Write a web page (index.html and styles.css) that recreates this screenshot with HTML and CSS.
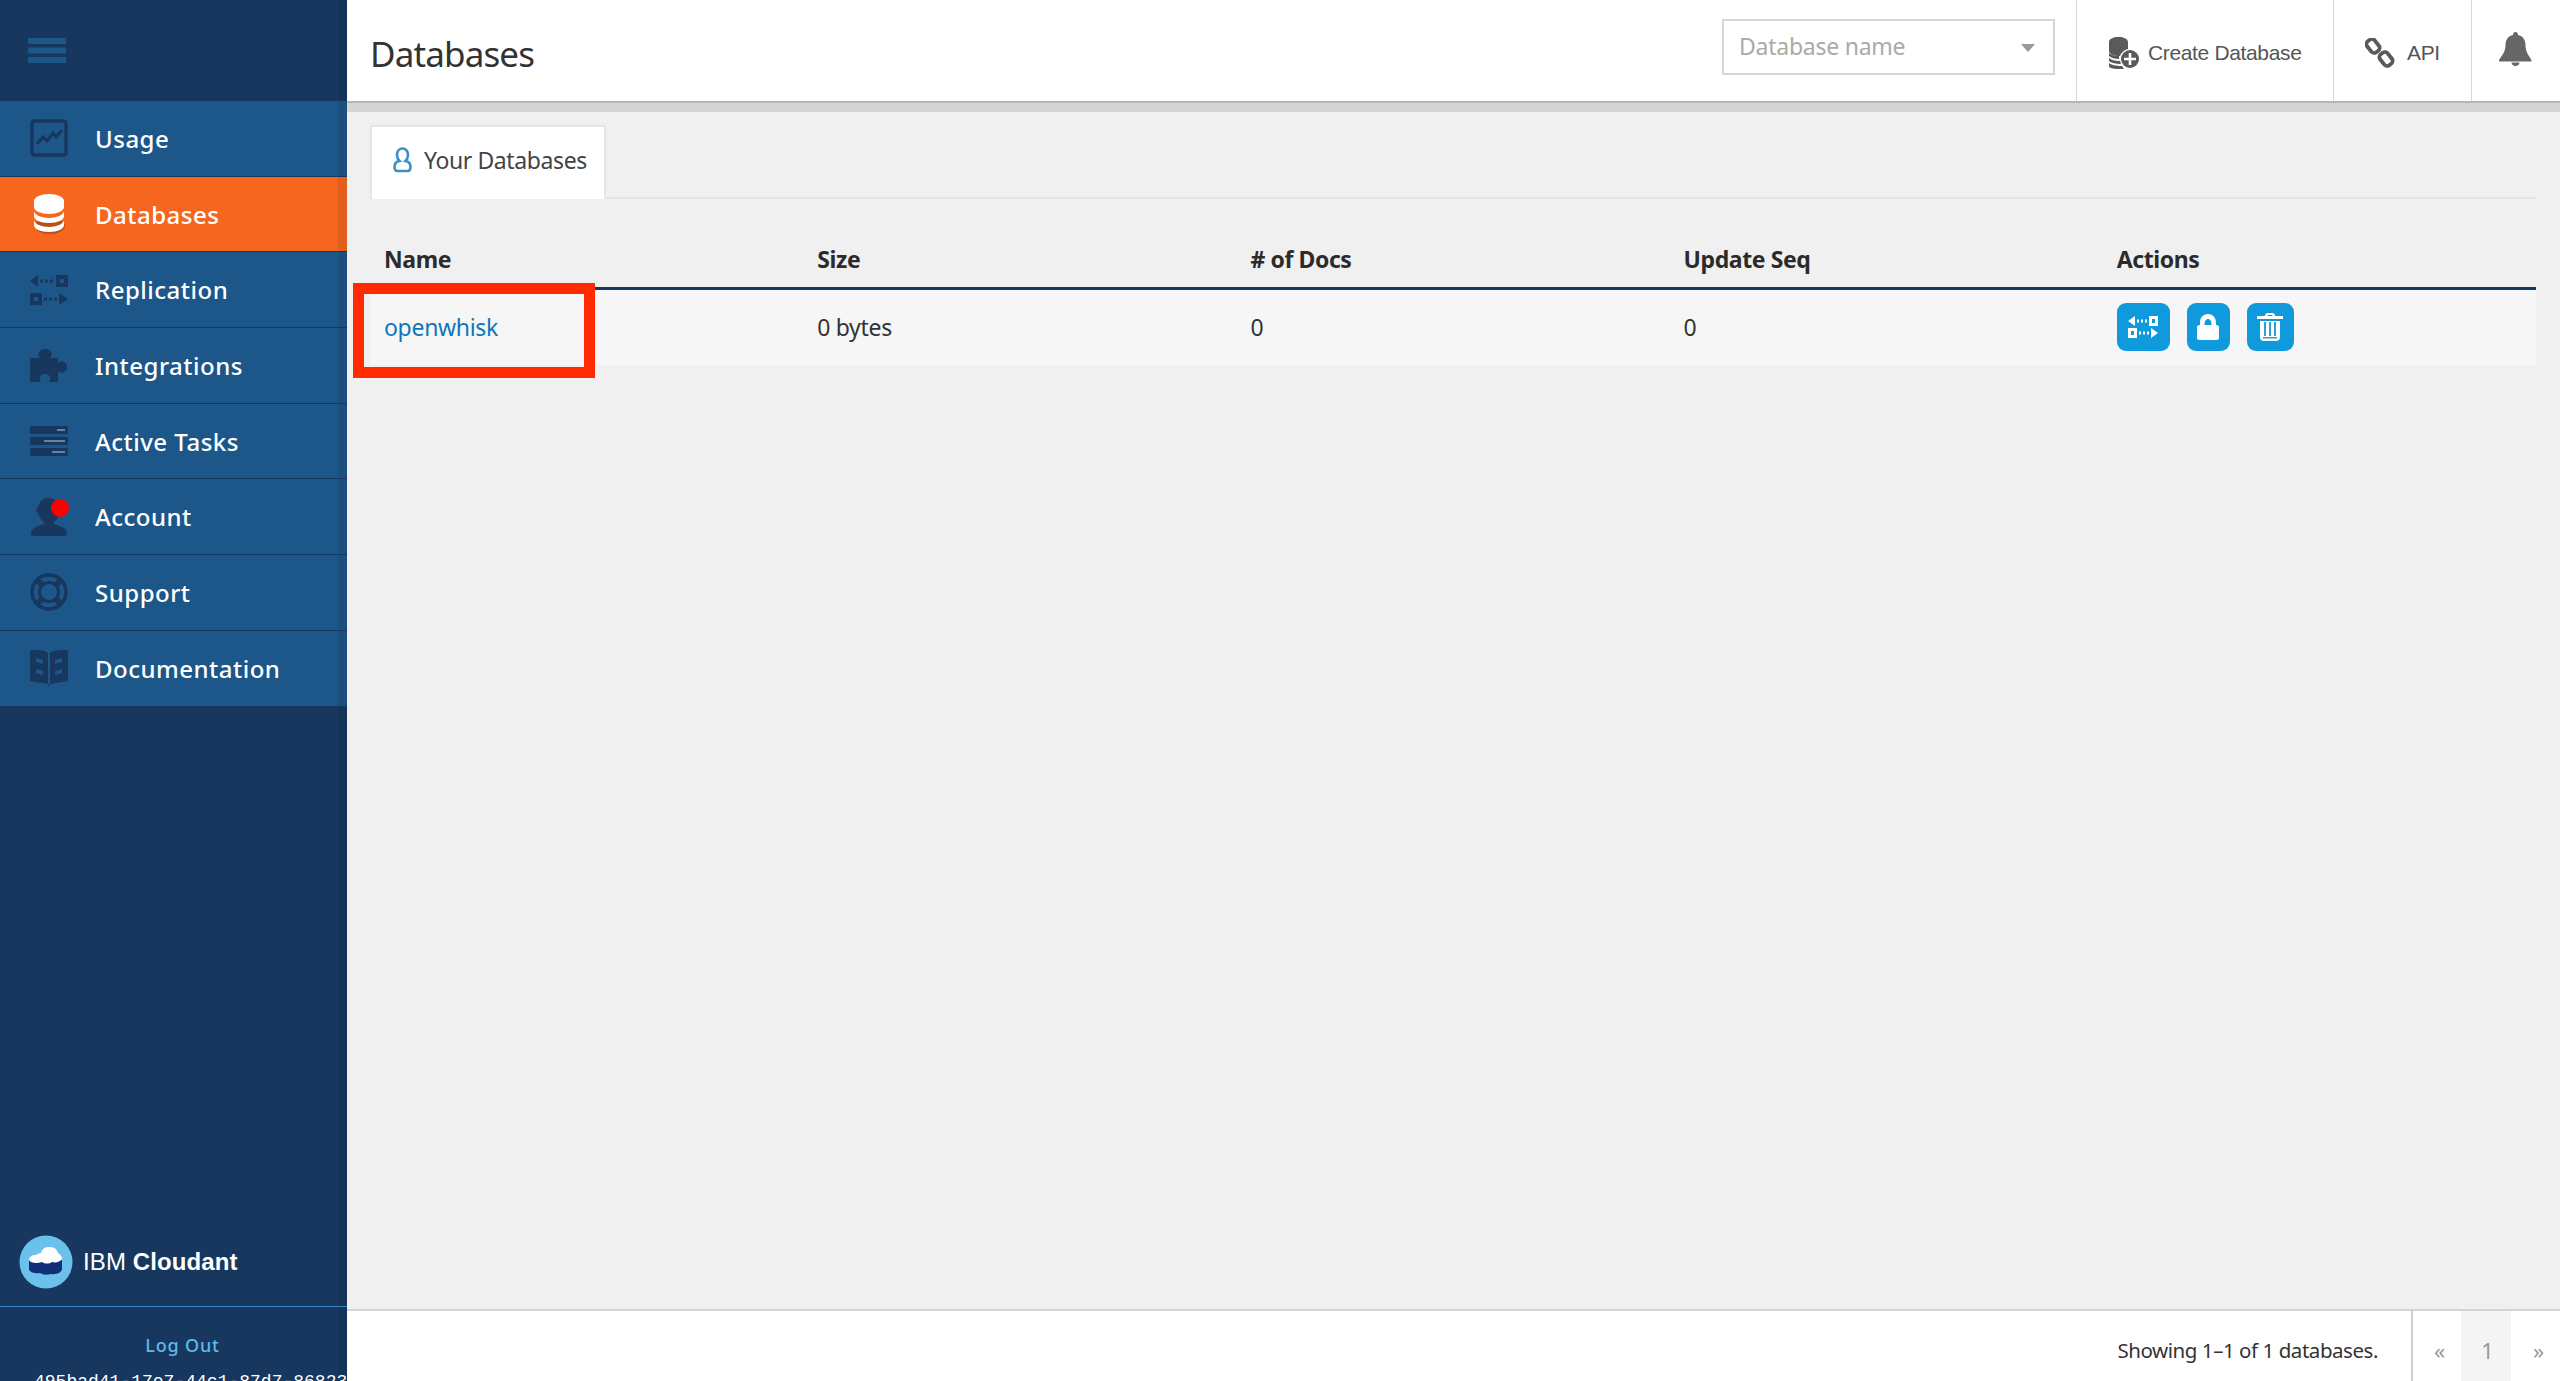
FILE: index.html
```html
<!DOCTYPE html>
<html lang="en">
<head>
<meta charset="utf-8">
<title>Databases</title>
<link rel="stylesheet" href="styles.css">
</head>
<body>
<div class="app">
  <aside class="sidebar">
    <div class="side-top">
      <svg class="burger" width="38" height="25" viewBox="0 0 38 25"><path d="M0 0h38v6H0zM0 9.500h38v6H0zM0 19h38v6H0z"/></svg>
    </div>
    <nav class="nav">
      <a class="nav-item">
        <svg class="nav-icon" viewBox="0 0 38 38"><rect x="2" y="2" width="34" height="34" rx="2.500" fill="none" stroke="currentColor" stroke-width="3.500"/><path d="M7 25l6-7 4 4 6-8 3 4 6-7" fill="none" stroke="currentColor" stroke-width="3"/></svg>
        <span>Usage</span>
      </a>
      <a class="nav-item active">
        <svg class="nav-icon icon-db" viewBox="0 0 38 44">
          <ellipse cx="20" cy="34" rx="15" ry="8" fill="#b9501a"/>
          <path d="M4 28c0 3 6 7 15 7s15-4 15-7v5c0 4-6 7-15 7S4 37 4 33z" fill="#fff"/>
          <path d="M4 19c0 3 6 7 15 7s15-4 15-7v5c0 4-6 7-15 7S4 28 4 24z" fill="#fff"/>
          <path d="M4 9c0-4 7-7 15-7s15 3 15 7v6c0 4-7 7-15 7S4 19 4 15z" fill="#fff"/>
        </svg>
        <span>Databases</span>
      </a>
      <a class="nav-item">
        <svg class="nav-icon" viewBox="0 0 38 30"><path d="M0 6l8-6v12zM10 4.500h3v3h-3zM15 4.500h3v3h-3zM20 4.500h3v3h-3zM26 0h12v12H26zM30 4v4h4V4zM0 18h12v12H0zM4 22v4h4v-4zM14 22.500h3v3h-3zM19 22.500h3v3h-3zM24 22.500h3v3h-3zM29 18l9 6-9 6z" fill="currentColor" fill-rule="evenodd"/></svg>
        <span>Replication</span>
      </a>
      <a class="nav-item">
        <svg class="nav-icon" viewBox="0 0 38 38"><path d="M0 12h10c-3-3-2-9 5-9s8 6 5 9h8v5c3-3 9-2 9 4s-6 7-9 4v11h-9c2-2 2-8-4-8s-6 6-4 8H0z" fill="currentColor"/></svg>
        <span>Integrations</span>
      </a>
      <a class="nav-item">
        <svg class="nav-icon" viewBox="0 0 38 30"><rect width="38" height="8" rx="1.500" fill="currentColor"/><rect y="11" width="38" height="8" rx="1.500" fill="currentColor"/><rect y="22" width="38" height="8" rx="1.500" fill="currentColor"/><path d="M27 3h8v2h-8zM14 14h21v2H14zM22 25h13v2H22z" fill="#5d86ac"/></svg>
        <span>Active Tasks</span>
      </a>
      <a class="nav-item">
        <span class="icon-wrap">
          <svg class="nav-icon" viewBox="0 0 38 38"><path d="M18 0c7 0 12 5 12 12 0 5-2 9-6 12v2c5 2 13 3 13 10 0 1-1 2-2 2H3c-1 0-2-1-2-2 0-7 8-8 13-10v-2c-3-2-5-5-6-9-1 0-2-1-2-3s1-2 2-3c1-5 5-9 10-9z" fill="currentColor"/></svg>
          <i class="badge"></i>
        </span>
        <span>Account</span>
      </a>
      <a class="nav-item">
        <svg class="nav-icon" viewBox="0 0 38 38"><circle cx="19" cy="19" r="17" fill="none" stroke="currentColor" stroke-width="3.500"/><circle cx="19" cy="19" r="9.500" fill="none" stroke="currentColor" stroke-width="3"/><path d="M7 7l6 6M31 7l-6 6M7 31l6-6M31 31l-6-6" stroke="currentColor" stroke-width="6"/></svg>
        <span>Support</span>
      </a>
      <a class="nav-item">
        <svg class="nav-icon" viewBox="0 0 38 38"><path d="M0 3c0-1 1-2 2-2 6 0 12 0 16 3v31L0 32zM38 3c0-1-1-2-2-2-6 0-12 0-16 3v31l18-3zM18 35h2l-1 3z" fill="currentColor"/><path d="M6 9l7 2v4l-7-2zM6 20l7 2v4l-7-2zM32 9l-7 2v4l7-2zM32 20l-7 2v4l7-2z" fill="#1d5689"/></svg>
        <span>Documentation</span>
      </a>
    </nav>
    <div class="side-spacer"></div>
    <div class="brand">
      <svg class="brand-logo" width="54" height="54" viewBox="0 0 54 54">
        <circle cx="27" cy="27" r="26.500" fill="#6cc0ec"/>
        <path d="M10 25v9c0 3 5 5 11 4 3 2 7 2 11 1 6 1 11-2 11-5v-9z" fill="#0f2f77"/>
        <path d="M10 25c0-3 3-5 7-5 1-1 3-2 5-2 1-4 4-6 8-6 5 0 8 2 9 6 2 1 4 3 4 6-2 3-6 4-10 3-3 2-7 2-10 0-5 2-12 1-13-2z" fill="#fff"/>
      </svg>
      <span class="brand-name">IBM <b>Cloudant</b></span>
    </div>
    <div class="side-foot">
      <a class="logout">Log Out</a>
      <div class="account-id">495bad41-17e7-44c1-87d7-868235fbc4d1-bluemix</div>
    </div>
  </aside>

  <main class="main">
    <header class="topbar">
      <h1 class="title">Databases</h1>
      <div class="select"><span>Database name</span><i class="caret"></i></div>
      <a class="top-btn btn-create">
        <svg width="30" height="32" viewBox="0 0 30 32"><path d="M0 5c0-3 4-5 9.500-5S19 2 19 5v7c-4 1-7 4-8 7-6 0-11-2-11-5z" fill="#5a5a5a"/><path d="M0 16c2 2 6 3 10 3v3c-4 0-8-1-10-3zM0 21c2 2 6 3 11 3l1 3c-5 0-10-1-12-3zM0 26c2 2 7 3 13 3l2 3H9c-5 0-9-1-9-3z" fill="#5a5a5a"/><circle cx="21" cy="22" r="9" fill="#5a5a5a"/><path d="M19.700 16h2.600v4.700H27v2.600h-4.700V28h-2.600v-4.700H15v-2.600h4.700z" fill="#fff"/></svg>
        <span>Create Database</span>
      </a>
      <a class="top-btn btn-api">
        <svg width="30" height="30" viewBox="0 0 30 30"><g fill="none" stroke="#5a5a5a" stroke-width="3.200"><rect x="-6" y="-4" width="12" height="8" rx="3" transform="translate(8 8) rotate(52) scale(1.150 1.200)"/><rect x="-6" y="-4" width="12" height="8" rx="3" transform="translate(21 21) rotate(52) scale(1.150 1.200)"/></g></svg>
        <span>API</span>
      </a>
      <a class="top-btn btn-bell">
        <svg width="33" height="34" viewBox="0 0 33 34"><path d="M16.500 0c1.500 0 2.500 1 2.500 3 5 1 7.500 5 7.500 10 0 7 3 10 6 15 0 1 0 1.500-1 1.500H1c-1 0-1-.5-1-1.500 3-5 6.500-8 6.500-15 0-5 2.500-9 7.500-10 0-2 1-3 2.500-3zM12.500 30.500h8c0 2-2 3.500-4 3.500s-4-1.500-4-3.500z" fill="#666"/></svg>
      </a>
    </header>
    <div class="strip"></div>

    <section class="content">
      <div class="tabs">
        <a class="tab">
          <svg width="19" height="26" viewBox="0 0 19 26"><path d="M9.500 1.500c3.300 0 5.500 2.700 5.500 6.500 0 2.500-1 4.500-2.500 6 3 .5 5 2.500 5 6 0 2.500-1 4-3 4h-10c-2 0-3-1.500-3-4 0-3.500 2-5.500 5-6C5 12.500 4 10.500 4 8c0-3.800 2.200-6.500 5.500-6.500z" fill="none" stroke="#3d8dc7" stroke-width="2.600"/></svg>
          <span>Your Databases</span>
        </a>
      </div>
      <table class="db-table">
        <thead>
          <tr><th>Name</th><th>Size</th><th># of Docs</th><th>Update Seq</th><th>Actions</th></tr>
        </thead>
        <tbody>
          <tr>
            <td class="name-cell"><a class="db-link">openwhisk</a><div class="highlight"></div></td>
            <td>0 bytes</td>
            <td>0</td>
            <td>0</td>
            <td class="actions">
              <a class="act act-rep"><svg width="30" height="22" viewBox="0 0 30 22"><path d="M0 5l7-5v10zM9 3.500h2v3H9zM13 3.500h2v3h-2zM17 3.500h2v3h-2zM21 0h9v10h-9zM24 3v4h3V3zM0 12h9v10H0zM3 15v4h3v-4zM11 15.500h2v3h-2zM15 15.500h2v3h-2zM19 15.500h2v3h-2zM23 12l7 5-7 5z" fill="#fff" fill-rule="evenodd"/></svg></a>
              <a class="act act-lock"><svg width="22" height="26" viewBox="0 0 22 26"><path d="M11 0c5 0 8 3.500 8 9v2h1c1 0 2 1 2 2v11c0 1-1 2-2 2H2c-1 0-2-1-2-2V13c0-1 1-2 2-2h1V9c0-5.500 3-9 8-9zm0 5c-2.500 0-3.500 2-3.500 6h7c0-4-1-6-3.500-6z" fill="#fff" fill-rule="evenodd"/></svg></a>
              <a class="act act-del"><svg width="26" height="28" viewBox="0 0 26 28"><path d="M8 3c0-2 1-3 3-3h4c2 0 3 1 3 3h8v3H0V3zM10.500 3h5c0-.8-.5-1-1-1h-3c-.5 0-1 .2-1 1zM3 8h20v16c0 2.500-1.500 4-4 4H7c-2.500 0-4-1.500-4-4z" fill="#fff" fill-rule="evenodd"/><path d="M7 9h2v14H7zM12 9h2v14h-2zM17 9h2v14h-2zM6 24h14v1.500H6z" fill="#2e9fdd"/></svg></a>
            </td>
          </tr>
        </tbody>
      </table>
    </section>

    <footer class="footer">
      <span class="showing">Showing 1–1 of 1 databases.</span>
      <div class="pager"><a class="prev">«</a><a class="current">1</a><a class="next">»</a></div>
    </footer>
  </main>
</div>
</body>
</html>
```

FILE: styles.css
```css
* { box-sizing: border-box; }
html, body { margin: 0; height: 100%; }
body {
  font-family: "Noto Sans", "Open Sans", sans-serif;
  color: #333;
  background: #f0f0f0;
  overflow: hidden;
}
.app { display: flex; height: 100vh; overflow: hidden; }

/* Sidebar */
.sidebar {
  width: 347px;
  flex: none;
  display: flex;
  flex-direction: column;
  background: #17375f;
  box-shadow: inset -9px 0 0 rgba(0, 0, 0, .05);
  overflow: hidden;
  color: #fff;
  position: relative;
}
.side-top { height: 101px; padding: 38px 0 0 28px; flex: none; }
.burger { display: block; fill: #1d5689; }
.nav { flex: none; }
.nav-item {
  height: 75.7px;
  display: flex;
  align-items: center;
  padding-left: 30px;
  background: #1d5689;
  border-bottom: 1.500px solid #17375f;
  box-shadow: inset -9px 0 0 rgba(0, 0, 0, .08);
  color: #17375f;
  font-size: 24px;
  font-weight: 500;
  letter-spacing: .5px;
}
.nav-item > span:last-child { color: #fff; margin-left: 27px; }
.nav-icon { width: 38px; height: 38px; display: block; flex: none; }
.nav-icon.icon-db { height: 44px; }
.nav-item.active { background: #f6661f; }
.icon-wrap { position: relative; display: block; width: 38px; height: 38px; }
.badge {
  position: absolute;
  right: -1px;
  top: 1px;
  width: 18px;
  height: 18px;
  border-radius: 50%;
  background: #f00;
}
.side-spacer { flex: 1; }
.brand {
  height: 95px;
  flex: none;
  display: flex;
  align-items: center;
  gap: 10px;
  padding: 6px 0 0 19px;
  border-bottom: 1px solid #3b82bf;
}
.brand-name { font-family: "Liberation Sans", Arial, sans-serif; font-size: 24px; letter-spacing: .1px; }
.brand-name b { font-weight: 700; }
.side-foot { flex: none; height: 74px; padding-top: 26px; text-align: center; padding-left: 18px; overflow: hidden; }
.logout { display: block; color: #5fb8ea; font-size: 18px; font-weight: 500; letter-spacing: .8px; line-height: 24px; }
.account-id {
  margin-top: 13px;
  font-family: "Liberation Mono", monospace;
  font-size: 18px;
  line-height: 24px;
  white-space: nowrap;
  text-align: left;
  padding-left: 16px;
}

/* Header */
.main { flex: 1; min-width: 0; display: flex; flex-direction: column; }
.topbar {
  height: 103px;
  flex: none;
  display: flex;
  align-items: stretch;
  background: #fff;
  border-bottom: 2px solid #b5b5b5;
  padding-left: 23px;
}
.title { margin: 0; flex: 1; font-size: 35px; font-weight: 400; line-height: 107px; color: #333; letter-spacing: -.87px; }
.select {
  width: 333px;
  height: 56px;
  margin: 19px 21px 0 0;
  border: 2px solid #d6d6d6;
  display: flex;
  align-items: center;
  justify-content: space-between;
  padding: 0 18px 2px 15px;
  color: #aaa;
  font-size: 23px;
  letter-spacing: -.25px;
}
.caret { width: 0; height: 0; border: 7px solid transparent; border-top: 8px solid #999; border-bottom: 0; margin-top: 4px; }
.top-btn {
  display: flex;
  align-items: center;
  border-left: 1px solid #d9d9d9;
  color: #555;
  font-family: "Liberation Sans", Arial, sans-serif;
  font-size: 21px;
  letter-spacing: -.35px;
  padding-top: 5px;
}
.btn-create { width: 257px; padding-left: 32px; gap: 9px; }
.btn-api { width: 138px; padding-left: 31px; gap: 12px; }
.btn-bell { width: 89px; padding: 0 0 4px 27px; }
.strip { height: 9px; background: #d5d5d5; flex: none; }

/* Content */
.content { flex: 1; padding: 13px 24px 0 23px; background: #f0f0f0; min-height: 0; }
.tabs { height: 74px; border-bottom: 2px solid #e4e4e4; display: flex; }
.tab {
  width: 236px;
  height: 74px;
  background: #fff;
  border: 2px solid #e6e6e6;
  border-bottom: 0;
  display: flex;
  align-items: center;
  gap: 12px;
  padding: 0 0 6px 21px;
  font-size: 23px;
  color: #444;
  letter-spacing: -.4px;
}
.db-table { width: 100%; border-collapse: collapse; table-layout: fixed; }
.db-table th {
  height: 89px;
  padding: 33px 0 0 14px;
  text-align: left;
  font-size: 23px;
  font-weight: 700;
  color: #2b2b2b;
  border-bottom: 3px solid #17375f;
  letter-spacing: -.4px;
}
.db-table td {
  height: 77px;
  padding: 0 0 0 14px;
  background: #f6f6f6;
  font-size: 23px;
  color: #333;
  letter-spacing: -.3px;
}
.name-cell { position: relative; }
.db-link { color: #0f76bb; }
.highlight {
  position: absolute;
  left: -17px;
  top: -7px;
  width: 242px;
  height: 95px;
  border: 11px solid #ff2a00;
  pointer-events: none;
}
.db-table td.actions { padding-left: 14px; font-size: 0; }
.act {
  display: inline-flex;
  align-items: center;
  justify-content: center;
  height: 48px;
  margin: 0 17px 0 0;
  vertical-align: middle;
  background: #0f9ade;
  border-radius: 9px;
}
.act-rep { width: 53px; }
.act-lock { width: 43px; }
.act-del { width: 47px; }

/* Footer */
.footer {
  height: 72px;
  flex: none;
  display: flex;
  justify-content: flex-end;
  background: #fff;
  border-top: 2px solid #d4d4d4;
}
.showing { font-size: 20.5px; line-height: 79px; margin-right: 33px; color: #333; letter-spacing: -.45px; }
.pager { display: flex; width: 149px; border-left: 2px solid #d0d0d0; }
.pager a { width: 50px; text-align: center; color: #999; font-size: 22px; line-height: 78px; }
.pager a.prev { width: 48px; text-indent: 5px; }
.pager a.current { background: #f4f4f4; text-indent: 3px; }
.pager a.next { width: 49px; text-indent: 6px; }
```
